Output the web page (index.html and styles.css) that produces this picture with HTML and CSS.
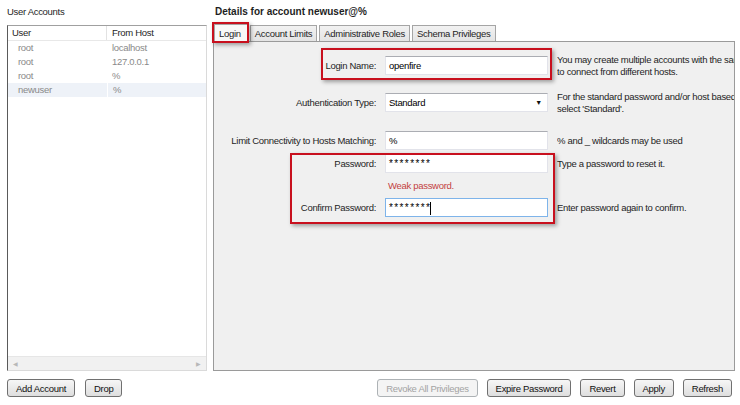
FILE: index.html
```html
<!DOCTYPE html>
<html lang="en">
<head>
    <meta charset="UTF-8">
    <title>User Accounts</title>
    <link rel="stylesheet" href="styles.css">
</head>
<body>
    <div class="window">
        <div class="left">
            <div class="caption">User Accounts</div>
            <div class="listbox">
                <div class="list-head">
                    <div class="col-user">User</div>
                    <div class="col-host">From Host</div>
                </div>
                <div class="list-row">
                    <div class="col-user">root</div>
                    <div class="col-host">localhost</div>
                </div>
                <div class="list-row">
                    <div class="col-user">root</div>
                    <div class="col-host">127.0.0.1</div>
                </div>
                <div class="list-row">
                    <div class="col-user">root</div>
                    <div class="col-host">%</div>
                </div>
                <div class="list-row selected">
                    <div class="col-user">newuser</div>
                    <div class="col-host">%</div>
                </div>
                <div class="list-fill"></div>
                <div class="hscroll">
                    <span class="arrow">&#9664;</span>
                    <span class="arrow">&#9654;</span>
                </div>
            </div>
            <div class="buttons">
                <button class="btn">Add Account</button>
                <button class="btn">Drop</button>
            </div>
        </div>

        <div class="right">
            <div class="caption bold">Details for account newuser@%</div>
            <div class="tabs">
                <div class="tab active">Login</div>
                <div class="tab">Account Limits</div>
                <div class="tab">Administrative Roles</div>
                <div class="tab">Schema Privileges</div>
                <div class="mark mark-tab"></div>
            </div>
            <div class="tab-panel">
                <div class="form-row row-login">
                    <div class="label">Login Name:</div>
                    <div class="field">openfire</div>
                    <div class="desc">You may create multiple accounts with the same name<br>to connect from different hosts.</div>
                </div>
                <div class="form-row row-auth">
                    <div class="label">Authentication Type:</div>
                    <div class="field select">Standard<span class="drop">&#9660;</span></div>
                    <div class="desc">For the standard password and/or host based authentication,<br>select 'Standard'.</div>
                </div>
                <div class="form-row row-limit">
                    <div class="label">Limit Connectivity to Hosts Matching:</div>
                    <div class="field">%</div>
                    <div class="desc">% and _ wildcards may be used</div>
                </div>
                <div class="form-row row-pass">
                    <div class="label">Password:</div>
                    <div class="field stars">********</div>
                    <div class="desc">Type a password to reset it.</div>
                </div>
                <div class="form-row row-weak">
                    <div></div>
                    <div class="weak">Weak password.</div>
                    <div></div>
                </div>
                <div class="form-row row-confirm">
                    <div class="label">Confirm Password:</div>
                    <div class="field stars focus">********<span class="caret"></span></div>
                    <div class="desc">Enter password again to confirm.</div>
                </div>

                <div class="mark mark-login"></div>
                <div class="mark mark-pass"></div>
            </div>
            <div class="buttons right-buttons">
                <button class="btn" disabled>Revoke All Privileges</button>
                <button class="btn">Expire Password</button>
                <button class="btn">Revert</button>
                <button class="btn">Apply</button>
                <button class="btn">Refresh</button>
            </div>
        </div>
    </div>
</body>
</html>
```

FILE: styles.css
```css
body {
    margin: 0;
    padding: 0;
    background: #ffffff;
    font-family: "Liberation Sans", Arial, sans-serif;
    font-size: 9.5px;
    letter-spacing: -0.3px;
    color: #000;
}

.window {
    width: 740px;
    height: 405px;
    box-sizing: border-box;
    padding: 5px 5px 8px 7px;
    display: flex;
    gap: 6px;
}

.left {
    width: 200px;
    display: flex;
    flex-direction: column;
}

.right {
    flex: 1;
    display: flex;
    flex-direction: column;
}

.caption {
    height: 14px;
    line-height: 14px;
    color: #1e1e1e;
    margin-bottom: 6px;
}

.caption.bold {
    font-size: 10px;
    font-weight: bold;
    letter-spacing: 0;
    padding-left: 2px;
    margin-bottom: 5px;
}

/* list of accounts */
.listbox {
    flex: 1;
    background: #fff;
    border: 1px solid #dadada;
    border-left-color: #5a5a5a;
    border-top-color: #a0a0a0;
    display: flex;
    flex-direction: column;
}

.list-head,
.list-row {
    display: flex;
    height: 14px;
    line-height: 14px;
}

.list-head {
    border-bottom: 1px solid #e8e8e8;
    color: #1e1e1e;
}

.list-head .col-user {
    padding-left: 4px;
    border-right: 1px solid #e2e2e2;
}

.col-user {
    width: 99px;
    box-sizing: border-box;
    padding-left: 10px;
}

.col-host {
    padding-left: 5px;
    flex: 1;
}

.list-row {
    color: #8a8a8a;
}

.list-row.selected .col-user,
.list-row.selected .col-host {
    background: #eef2f8;
}

.list-row.selected .col-user {
    margin-right: 1px;
}

.list-fill {
    flex: 1;
}

.hscroll {
    height: 13px;
    background: #f1f1f1;
    border-top: 1px solid #e6e6e6;
    display: flex;
    justify-content: space-between;
    align-items: center;
    padding: 0 5px;
}

.arrow {
    font-size: 6px;
    color: #b8b8b8;
}

/* tabs */
.tabs {
    position: relative;
    display: flex;
    align-items: flex-end;
    height: 17px;
    padding-left: 1px;
    gap: 2px;
}

.tab {
    height: 15px;
    line-height: 15px;
    padding: 0 4px;
    background: linear-gradient(#f2f2f2, #e4e4e4);
    border: 1px solid #a5a5a5;
    border-bottom: none;
    color: #1e1e1e;
}

.tab.active {
    height: 17px;
    line-height: 17px;
    background: #f8f8f8;
    padding: 0 6px 0 4px;
    margin-bottom: -1px;
    position: relative;
    z-index: 1;
}

.tab-panel {
    position: relative;
    flex: 1;
    background: #f0f0f0;
    border: 1px solid #9a9a9a;
    padding-top: 14px;
}

.form-row {
    display: grid;
    grid-template-columns: 162px 163px 1fr;
    grid-template-rows: 19px;
    column-gap: 9px;
    align-items: center;
}

.label {
    text-align: right;
    color: #1e1e1e;
    white-space: nowrap;
}

.field {
    height: 17px;
    line-height: 17px;
    background: #fff;
    border: 1px solid #e2e3ea;
    border-top-color: #abadb3;
    padding-left: 3px;
    position: relative;
    white-space: nowrap;
}

.field.select .drop {
    position: absolute;
    right: 5px;
    top: 0;
    font-size: 7px;
    color: #111;
}

.field.stars {
    font-size: 10px;
    letter-spacing: 1.4px;
}

.field.focus {
    border-color: #7eb4ea;
}

.caret {
    display: inline-block;
    width: 1px;
    height: 13px;
    background: #000;
    vertical-align: middle;
    margin-left: -1px;
}

.desc {
    align-self: unsafe center;
    color: #1e1e1e;
    line-height: 12px;
    white-space: nowrap;
    overflow: hidden;
}

.row-auth {
    margin-top: 18px;
}

.row-limit {
    margin-top: 19px;
}

.row-pass {
    margin-top: 4px;
}

.row-weak {
    grid-template-rows: 25px;
}

.weak {
    color: #c3423f;
    padding-left: 3px;
}

/* annotations laid over the form */
.mark {
    position: absolute;
    border: 2px solid #c8101e;
    box-shadow: 2px 2px 4px rgba(0, 0, 0, 0.35);
    pointer-events: none;
}

.mark-tab {
    left: -1px;
    top: -2px;
    width: 33px;
    height: 17px;
    z-index: 2;
}

.mark-login {
    left: 107px;
    top: 6px;
    width: 227px;
    height: 28px;
}

.mark-pass {
    left: 76px;
    top: 111px;
    width: 261px;
    height: 67px;
}

/* buttons */
.buttons {
    display: flex;
    gap: 10px;
    margin-top: 8px;
    height: 18px;
}

.right-buttons {
    justify-content: flex-end;
    gap: 9px;
    padding-right: 3px;
}

.btn {
    font-family: "Liberation Sans", Arial, sans-serif;
    font-size: 9.5px;
    letter-spacing: -0.3px;
    height: 18px;
    padding: 0 8px;
    background: linear-gradient(#f6f6f6, #dedede);
    border: 1px solid #707070;
    border-radius: 3px;
    color: #111;
}

.btn:disabled {
    background: #f4f4f4;
    border-color: #adb2b5;
    color: #a3a3a3;
}
```
